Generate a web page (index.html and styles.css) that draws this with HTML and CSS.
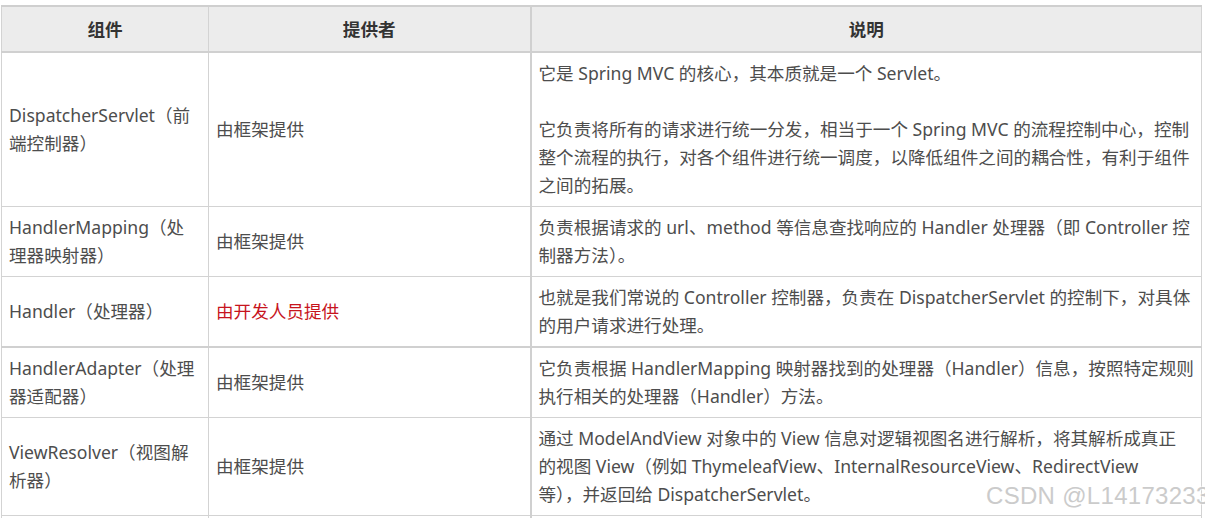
FILE: index.html
```html
<!DOCTYPE html>
<html lang="zh-CN">
<head>
<meta charset="utf-8">
<title>Spring MVC 组件</title>
<link rel="stylesheet" href="styles.css">
</head>
<body>
<div class="page">
  <table class="grid">
    <colgroup>
      <col class="c1">
      <col class="c2">
      <col class="c3">
    </colgroup>
    <thead>
      <tr>
        <th>组件</th>
        <th>提供者</th>
        <th>说明</th>
      </tr>
    </thead>
    <tbody>
      <tr>
        <td class="name">DispatcherServlet（前端控制器）</td>
        <td>由框架提供</td>
        <td>
          <p class="para gap">它是 Spring MVC 的核心，其本质就是一个 Servlet。</p>
          <p class="para">它负责将所有的请求进行统一分发，相当于一个 Spring MVC 的流程控制中心，控制整个流程的执行，对各个组件进行统一调度，以降低组件之间的耦合性，有利于组件之间的拓展。</p>
        </td>
      </tr>
      <tr>
        <td class="name">HandlerMapping（处理器映射器）</td>
        <td>由框架提供</td>
        <td>负责根据请求的 url、method 等信息查找响应的 Handler 处理器（即 Controller 控制器方法）。</td>
      </tr>
      <tr class="thick">
        <td class="name">Handler（处理器）</td>
        <td class="dev">由开发人员提供</td>
        <td>也就是我们常说的 Controller 控制器，负责在 DispatcherServlet 的控制下，对具体的用户请求进行处理。</td>
      </tr>
      <tr>
        <td class="name">HandlerAdapter（处理器适配器）</td>
        <td>由框架提供</td>
        <td>它负责根据 HandlerMapping 映射器找到的处理器（Handler）信息，按照特定规则执行相关的处理器（Handler）方法。</td>
      </tr>
      <tr>
        <td class="name">ViewResolver（视图解析器）</td>
        <td>由框架提供</td>
        <td>通过 ModelAndView 对象中的 View 信息对逻辑视图名进行解析，将其解析成真正<br>的视图 View（例如 ThymeleafView、InternalResourceView、RedirectView<br>等），并返回给 DispatcherServlet。</td>
      </tr>
      <tr>
        <td class="name">View（视图）</td>
        <td>由框架提供</td>
        <td>View 对象本身由框架提供。</td>
      </tr>
    </tbody>
  </table>
  <div class="watermark">CSDN @L14173233</div>
</div>
</body>
</html>
```
FILE: styles.css
```css
html, body {
  margin: 0;
  padding: 0;
  background: #ffffff;
  overflow: hidden;
}

.page {
  position: relative;
  width: 1205px;
  height: 518px;
  overflow: hidden;
  padding: 5px 0 0 1px;
  box-sizing: border-box;
}

.grid {
  border-collapse: collapse;
  table-layout: fixed;
  width: 1200px;
  font-family: "Noto Sans", "Noto Sans CJK SC", sans-serif;
  font-size: 17.6px;
  line-height: 28px;
  color: #4d4d4d;
  border-top: 2px solid #cfcfcf;
}

.c1 { width: 207px; }
.c2 { width: 322px; }
.c3 { width: 671px; }

.grid th,
.grid td {
  border: 1px solid #d3d3d3;
  padding: 6px 5px 7px 7px;
  vertical-align: middle;
  text-align: left;
  word-break: break-all;
}

.grid td.name {
  padding-right: 10px;
}

.grid th {
  background: #ececec;
  color: #333333;
  font-weight: bold;
  text-align: center;
  padding: 8px 8px 8px 8px;
  border-bottom: 2px solid #d0d0d0;
}

.grid th:nth-child(3),
.grid td:nth-child(3) {
  border-left: 2px solid #d0d0d0;
}

.grid tr.thick td {
  border-bottom: 2px solid #d0d0d0;
}

.para {
  margin: 0;
}

.para.gap {
  margin-bottom: 28px;
}

.dev {
  color: #c7141d;
}

.watermark {
  position: absolute;
  left: 986px;
  top: 481px;
  font-family: "Liberation Sans", Arial, sans-serif;
  font-size: 24px;
  line-height: 30px;
  color: #cbcbcb;
  white-space: nowrap;
  letter-spacing: 0.3px;
  text-shadow: 0 0 2px #ffffff, 0 0 2px #ffffff;
}
```
